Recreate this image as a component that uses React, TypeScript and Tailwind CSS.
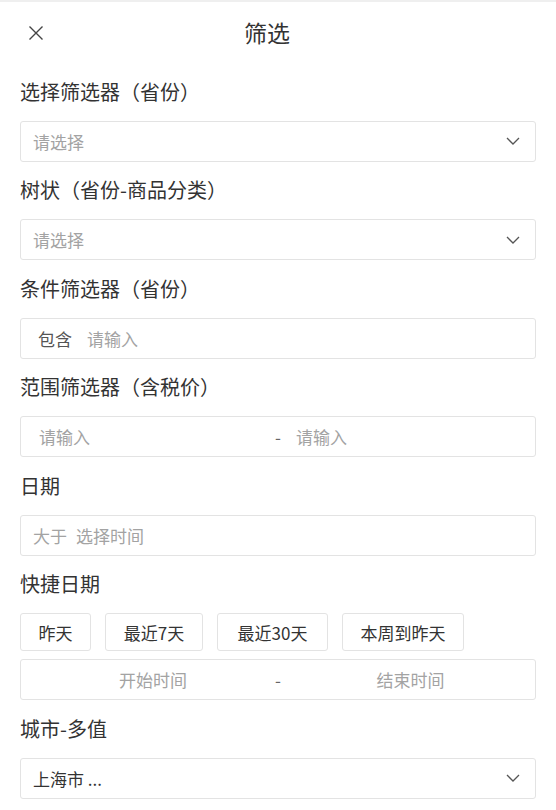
import React from "react";

const font = { fontFamily: '"Noto Sans CJK SC", "Noto Sans", sans-serif' };

function Chevron() {
  return (
    <svg width="14" height="8" viewBox="0 0 14 8" fill="none" className="shrink-0">
      <path d="M1 1 L7 7 L13 1" stroke="#555" strokeWidth="1.3" />
    </svg>
  );
}

function Label({ children }: { children: React.ReactNode }) {
  return (
    <div className="flex h-[57.5px] items-center text-[20px] leading-none text-[#333]">
      {children}
    </div>
  );
}

function Box({ children }: { children: React.ReactNode }) {
  return (
    <div className="flex h-[41px] items-center rounded-[3px] border border-[#e3e3e3] text-[17px] leading-none">
      {children}
    </div>
  );
}

function SelectBox({ text, dark }: { text: string; dark?: boolean }) {
  return (
    <Box>
      <span className={`flex-1 pl-3 ${dark ? "text-[#333]" : "text-[#a3a3a3]"}`}>{text}</span>
      <span className="pr-[15px]">
        <Chevron />
      </span>
    </Box>
  );
}

const quick = [
  { text: "昨天", w: "w-[71px]" },
  { text: "最近7天", w: "w-[98px]" },
  { text: "最近30天", w: "w-[111px]" },
  { text: "本周到昨天", w: "w-[122px]" },
];

export default function App() {
  return (
    <div className="min-h-[810px] w-[556px] border-t-2 border-[#efefef] bg-white" style={font}>
      <div className="relative flex h-[61px] items-center justify-center pr-[22px]">
        <button type="button" className="absolute left-[28px] top-[23px] p-0">
          <svg width="16" height="16" viewBox="0 0 16 16" fill="none">
            <path d="M1.5 1.5 L14.5 14.5 M14.5 1.5 L1.5 14.5" stroke="#444" strokeWidth="1.4" />
          </svg>
        </button>
        <span className="text-[23px] leading-none text-[#333]">筛选</span>
      </div>

      <div className="px-5">
        <Label>选择筛选器（省份）</Label>
        <SelectBox text="请选择" />

        <Label>树状（省份-商品分类）</Label>
        <SelectBox text="请选择" />

        <Label>条件筛选器（省份）</Label>
        <Box>
          <span className="pl-[17px] text-[#555]">包含</span>
          <span className="pl-[15px] text-[#a3a3a3]">请输入</span>
        </Box>

        <Label>范围筛选器（含税价）</Label>
        <Box>
          <span className="w-[239px] shrink-0 pl-[18px] text-[#a3a3a3]">请输入</span>
          <span className="w-[36px] shrink-0 text-center text-[#666]">-</span>
          <span className="flex-1 text-[#a3a3a3]">请输入</span>
        </Box>

        <Label>日期</Label>
        <Box>
          <span className="pl-3 text-[#a3a3a3]">大于</span>
          <span className="pl-[9px] text-[#a3a3a3]">选择时间</span>
        </Box>

        <Label>快捷日期</Label>
        <div className="flex gap-[14px]">
          {quick.map((q) => (
            <button
              key={q.text}
              type="button"
              className={`h-[38px] ${q.w} rounded-[3px] border border-[#e3e3e3] text-center text-[17px] leading-none text-[#333]`}
            >
              {q.text}
            </button>
          ))}
        </div>
        <div className="mt-2">
          <Box>
            <span className="w-[249px] shrink-0 pl-[15px] text-center text-[#a3a3a3]">开始时间</span>
            <span className="w-[16px] shrink-0 text-center text-[#666]">-</span>
            <span className="flex-1 text-center text-[#a3a3a3]">结束时间</span>
          </Box>
        </div>

        <Label>城市-多值</Label>
        <SelectBox text="上海市 ..." dark />
      </div>
    </div>
  );
}
